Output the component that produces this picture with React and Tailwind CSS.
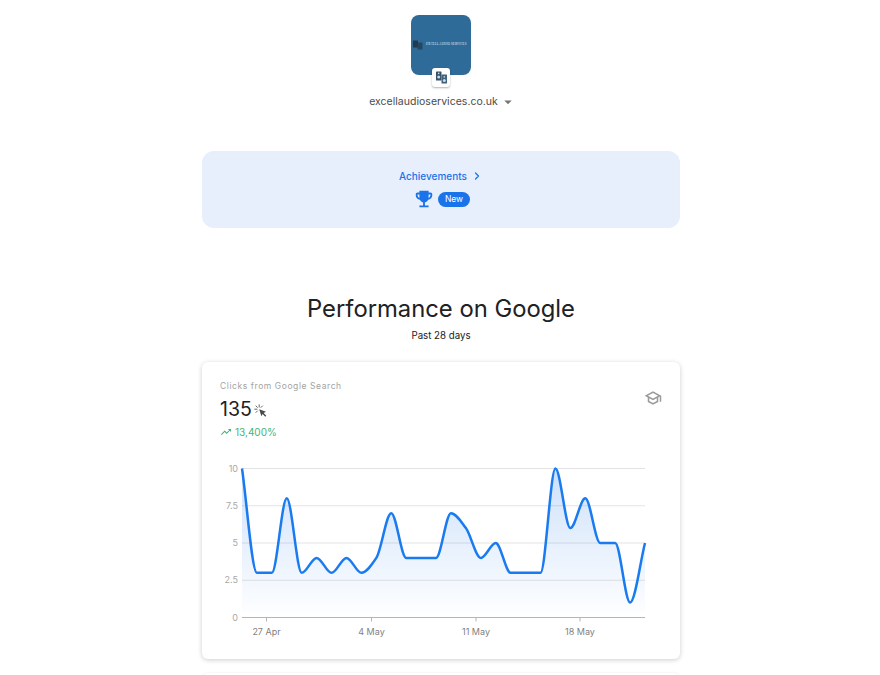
import { MdEmojiEvents, MdOutlineSchool, MdTrendingUp, MdArrowDropDown } from 'react-icons/md'
import { ChevronRight } from 'lucide-react'

const clicks = [10,3,3,8,3,4,3,4,3,4,7,4,4,4,7,6,4,5,3,3,3,10,6,8,5,5,1,5]

/* chart area in svg coords: the svg is 478 wide and starts at the card's left edge */
const X0 = 40
const X1 = 443
const Y0 = 255.5
const Y10 = 106.5

const px = i => X0 + (i * (X1 - X0)) / (clicks.length - 1)
const py = v => Y0 - ((Y0 - Y10) * v) / 10

/* monotone cubic, so the flat runs stay flat */
const buildLine = () => {
  const pts = clicks.map((v, i) => [px(i), py(v)])
  const n = pts.length
  const slopes = []
  for (let i = 0; i < n - 1; i++) slopes.push((pts[i + 1][1] - pts[i][1]) / (pts[i + 1][0] - pts[i][0]))
  const t = pts.map((_, i) => {
    if (i === 0) return slopes[0]
    if (i === n - 1) return slopes[n - 2]
    const a = slopes[i - 1]
    const b = slopes[i]
    if (a * b <= 0) return 0
    return (2 * a * b) / (a + b)
  })
  let d = `M${pts[0][0]},${pts[0][1]}`
  for (let i = 0; i < n - 1; i++) {
    const h = (pts[i + 1][0] - pts[i][0]) / 3
    d += `C${pts[i][0] + h},${pts[i][1] + t[i] * h} ${pts[i + 1][0] - h},${pts[i + 1][1] - t[i + 1] * h} ${pts[i + 1][0]},${pts[i + 1][1]}`
  }
  return d
}

const line = buildLine()

const Chart = () => (
  <svg width="478" height="190" viewBox="0 90 478 190" className="block">
    <defs>
      <linearGradient id="fillArea" x1="0" y1="0" x2="0" y2="1">
        <stop offset="0%" stopColor="#1a73e8" stopOpacity="0.22" />
        <stop offset="45%" stopColor="#1a73e8" stopOpacity="0.12" />
        <stop offset="100%" stopColor="#1a73e8" stopOpacity="0.01" />
      </linearGradient>
    </defs>
    {[10, 7.5, 5, 2.5].map(v => (
      <line key={v} x1={X0} x2={X1} y1={py(v)} y2={py(v)} stroke="#e3e3e3" strokeWidth="1" />
    ))}
    <path d={`${line}L${X1},${Y0 - 5}L${X0},${Y0 - 5}Z`} fill="url(#fillArea)" />
    <path d={line} fill="none" stroke="#1a7bf0" strokeWidth="2.5" strokeLinejoin="round" />
    <line x1={X0} x2={X1} y1={Y0} y2={Y0} stroke="#b5b5b5" strokeWidth="1" />
    {[[10, '10'], [7.5, '7.5'], [5, '5'], [2.5, '2.5'], [0, '0']].map(([v, t]) => (
      <text key={t} x="36" y={py(v) + 3} textAnchor="end" fontSize="9" fill="#a8a8a8">{t}</text>
    ))}
    {[[64.5, '27 Apr'], [169.5, '4 May'], [274, '11 May'], [378, '18 May']].map(([x, t]) => (
      <g key={t}>
        <line x1={x} x2={x} y1={Y0} y2={Y0 + 4} stroke="#b5b5b5" />
        <text x={x} y={Y0 + 17} textAnchor="middle" fontSize="9" fill="#7f7f7f">{t}</text>
      </g>
    ))}
  </svg>
)

const SpeakerLogo = () => (
  <svg width="13" height="13" viewBox="0 0 13 13">
    <rect x="1" y="0.5" width="5.5" height="9" rx="0.6" fill="#35526b" />
    <rect x="6.5" y="3.5" width="5.5" height="9" rx="0.6" fill="#3f637f" />
    <circle cx="3.7" cy="6" r="1.5" fill="#cfd8df" />
    <circle cx="3.7" cy="2.4" r="0.8" fill="#cfd8df" />
    <circle cx="9.3" cy="9.5" r="1.5" fill="#cfd8df" />
    <circle cx="9.3" cy="5.9" r="0.8" fill="#cfd8df" />
  </svg>
)

/* cursor with the little click dashes round it */
const ClickIcon = () => (
  <svg width="13" height="13" viewBox="0 0 13 13" className="mt-[2px]">
    <path d="M5.2 5.2L12 7.8L9.6 9L12.3 11.7L11.3 12.7L8.6 10L7.4 12.2Z" fill="#4a4a4a" />
    <g stroke="#5f6368" strokeWidth="1" strokeLinecap="round">
      <path d="M0.8 5.2H3" />
      <path d="M5.2 0.8V3" />
      <path d="M2 2L3.4 3.4" />
      <path d="M8.4 2L7 3.4" />
      <path d="M2 8.4L3.4 7" />
    </g>
  </svg>
)

export default function App() {
  return (
    <div className="h-[675px] overflow-hidden bg-white font-['Inter',sans-serif] text-[#202124]">
      <div className="ml-[202px] flex w-[478px] flex-col items-center pt-[15px]">

        {/* LOGO */}
        <div className="relative h-[60px] w-[60px] rounded-lg bg-[#2f6b98]">
          <div className="flex h-full items-center gap-[3px] pb-[1px] pl-[2px]">
            <svg width="10" height="10" viewBox="0 0 10 9" className="shrink-0">
              <rect x="0" y="0" width="5" height="7" rx="0.5" fill="#203a50" />
              <rect x="4.5" y="2" width="5" height="7" rx="0.5" fill="#28465e" />
            </svg>
            <span className="whitespace-nowrap font-['Liberation_Serif',serif] text-[3px] uppercase leading-none tracking-[0.2px] text-[#e6edf3]">Excell Audio Services</span>
          </div>
          <div className="absolute left-[21px] top-[53px] flex h-[19px] w-[18px] items-center justify-center rounded-[3px] bg-white shadow-[0_1px_2px_rgba(0,0,0,0.3)]">
            <SpeakerLogo />
          </div>
        </div>

        <div className="mt-[20px] flex h-[14px] items-center text-[10.5px] text-[#4a4a4a]">
          <span className="ml-[4px] tracking-[0.02px]">excellaudioservices.co.uk</span>
          <MdArrowDropDown size={18} className="ml-[1px] text-[#777]" />
        </div>

        {/* ACHIEVEMENTS */}
        <div className="mt-[42px] flex h-[77px] w-full flex-col items-center rounded-xl bg-[#e7effc] pt-[18px]">
          <div className="flex h-[14px] items-center gap-[4px] text-[10px] font-medium text-[#1a73e8]">
            Achievements
            <ChevronRight size={12} strokeWidth={2.5} />
          </div>
          <div className="ml-[1px] mt-[5px] flex items-center gap-[3px]">
            <MdEmojiEvents size={22} className="text-[#1a73e8]" />
            <span className="flex h-[15px] items-center rounded-full bg-[#1a73e8] px-[7px] text-[8.5px] text-white">New</span>
          </div>
        </div>

        {/* TITLE */}
        <h1 className="mt-[64px] text-[23.8px] font-normal leading-[34px] text-[#202124]">Performance on Google</h1>
        <p className="mt-[3px] text-[9.7px] leading-[14px] text-[#202124]">Past 28 days</p>

        {/* CARD */}
        <div className="relative mt-[19px] h-[297px] w-full rounded-md bg-white shadow-[0_1px_5px_rgba(0,0,0,0.2)]">
          <div className="px-[18px] pt-[18px]">
            <p className="text-[8.5px] leading-[12px] tracking-[0.58px] text-[#a3a3a3]">Clicks from Google Search</p>
            <div className="mt-[3px] flex items-center gap-[2px]">
              <span className="text-[19.5px] leading-[28px] text-[#202124]">135</span>
              <ClickIcon />
            </div>
            <div className="mt-[2px] flex items-center gap-[3px] text-[10px] leading-[14px] text-[#3fb57c]">
              <MdTrendingUp size={12} />
              13,400%
            </div>
          </div>
          <MdOutlineSchool size={18} className="absolute right-[18px] top-[27px] text-[#9a9a9a]" />
          <div className="mt-[13px]">
            <Chart />
          </div>
        </div>

        {/* next card, cut off by the window */}
        <div className="mt-[14px] h-[40px] w-full rounded-md bg-white shadow-[0_0_3px_rgba(0,0,0,0.08)]" />
      </div>
    </div>
  )
}
